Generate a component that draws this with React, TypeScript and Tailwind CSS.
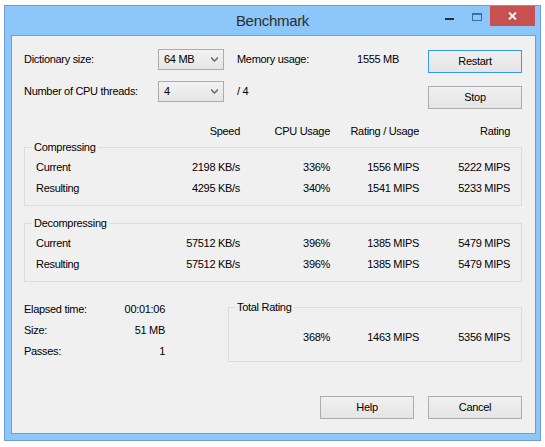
import type { ReactNode } from "react";

const cols = "grid grid-cols-[124px_80px_90px_89px_91px]";

function Chevron() {
  return (
    <svg width="7" height="5" viewBox="0 0 7 5" className="shrink-0">
      <path d="M0 0.5 L3.5 4 L7 0.5" fill="none" stroke="#707070" strokeWidth="1.6" />
    </svg>
  );
}

function Combo({ value }: { value: string }) {
  return (
    <div className="flex h-[21px] w-[66px] items-center justify-between border border-[#acacac] bg-gradient-to-b from-[#f2f2f2] to-[#e6e6e6] pl-[5px] pr-[5px]">
      <span>{value}</span>
      <Chevron />
    </div>
  );
}

function Btn({ children, focused }: { children: ReactNode; focused?: boolean }) {
  return (
    <div
      className={
        focused
          ? "flex h-[23px] w-[94px] items-center justify-center border border-[#3399ff] bg-gradient-to-b from-[#f0f0f0] to-[#e5e5e5]"
          : "flex h-[23px] w-[94px] items-center justify-center border border-[#acacac] bg-gradient-to-b from-[#f0f0f0] to-[#e5e5e5]"
      }
    >
      {children}
    </div>
  );
}

function Row({ label, cells }: { label: string; cells: string[] }) {
  return (
    <div className={`${cols} h-[21px] items-center`}>
      <span>{label}</span>
      {cells.map((c, i) => (
        <span key={i} className="text-right">
          {c}
        </span>
      ))}
    </div>
  );
}

function Group({ title, rows }: { title: string; rows: [string, string[]][] }) {
  return (
    <fieldset className="border border-[#dcdcdc] pb-[6px] pl-[11px]">
      <legend className="ml-[-4px] px-[2px] leading-[13px]">{title}</legend>
      <div className="pt-[3px]">
        {rows.map(([l, c]) => (
          <Row key={l} label={l} cells={c} />
        ))}
      </div>
    </fieldset>
  );
}

function TitleBar() {
  return (
    <div className="grid h-[29px] shrink-0 grid-cols-[1fr_auto_1fr]">
      <div />
      <div className="flex items-center pt-[1px] font-['Liberation_Sans',Arial,sans-serif] text-[15px] tracking-[-0.3px] text-[#2e2e2e]">
        Benchmark
      </div>
      <div className="flex items-start justify-end pr-[5px]">
        <div className="mt-[12px] h-[2px] w-[9px] bg-[#2b2b2b]" />
        <div className="ml-[18px] mt-[7px] h-[8px] w-[10px] border border-t-2 border-[#3b6ea8]" />
        <div className="ml-[8px] flex h-[20px] w-[45px] items-center justify-center bg-[#c75050]">
          <svg width="9" height="8" viewBox="0 0 9 8">
            <path d="M1 0.5 L8 7.5 M8 0.5 L1 7.5" stroke="#fff" strokeWidth="1.8" />
          </svg>
        </div>
      </div>
    </div>
  );
}

export default function App() {
  return (
    <div className="min-h-screen bg-white pl-[4px] pt-[5px] font-['Liberation_Sans',Arial,sans-serif]">
      <div className="flex h-[436px] w-[537px] flex-col border border-[#6f9fd2] bg-[#8dc6f8]">
        <TitleBar />
        <div className="mb-[6px] ml-[6px] mr-[4px] flex flex-1 flex-col border border-[#6d9fd4] bg-[#f0f0f0] pl-[12px] pr-[13px] text-[11px] leading-[13px] tracking-[-0.3px] text-black">
          <div className="flex">
            <div className="flex flex-col gap-[11px] pt-[13px]">
              <div className="flex h-[21px] items-center">
                <span className="w-[134px]">Dictionary size:</span>
                <Combo value="64 MB" />
                <span className="ml-[13px] w-[100px]">Memory usage:</span>
                <span className="w-[62px] text-right">1555 MB</span>
              </div>
              <div className="flex h-[21px] items-center">
                <span className="w-[134px]">Number of CPU threads:</span>
                <Combo value="4" />
                <span className="ml-[13px]">/ 4</span>
              </div>
            </div>
            <div className="ml-auto flex flex-col gap-[13px] pt-[14px]">
              <Btn focused>Restart</Btn>
              <Btn>Stop</Btn>
            </div>
          </div>

          <div className={`${cols} mt-[16px] pl-[12px]`}>
            <span />
            <span className="text-right">Speed</span>
            <span className="text-right">CPU Usage</span>
            <span className="text-right">Rating / Usage</span>
            <span className="text-right">Rating</span>
          </div>

          <div className="mt-[3px]">
            <Group
              title="Compressing"
              rows={[
                ["Current", ["2198 KB/s", "336%", "1556 MIPS", "5222 MIPS"]],
                ["Resulting", ["4295 KB/s", "340%", "1541 MIPS", "5233 MIPS"]],
              ]}
            />
          </div>
          <div className="mt-[11px]">
            <Group
              title="Decompressing"
              rows={[
                ["Current", ["57512 KB/s", "396%", "1385 MIPS", "5479 MIPS"]],
                ["Resulting", ["57512 KB/s", "396%", "1385 MIPS", "5479 MIPS"]],
              ]}
            />
          </div>

          <div className="mt-[17px] flex items-start">
            <div className="w-[141px]">
              {[
                ["Elapsed time:", "00:01:06"],
                ["Size:", "51 MB"],
                ["Passes:", "1"],
              ].map(([l, v]) => (
                <div key={l} className="flex h-[21px] items-center justify-between">
                  <span>{l}</span>
                  <span>{v}</span>
                </div>
              ))}
            </div>
            <fieldset className="ml-auto mt-[2px] w-[294px] border border-[#dcdcdc] pb-[17px]">
              <legend className="ml-[6px] px-[2px] leading-[13px]">Total Rating</legend>
              <div className="grid grid-cols-[101px_89px_91px] pt-[17px]">
                <span className="text-right">368%</span>
                <span className="text-right">1463 MIPS</span>
                <span className="text-right">5356 MIPS</span>
              </div>
            </fieldset>
          </div>

          <div className="mb-[14px] mt-auto flex justify-end gap-[14px]">
            <Btn>Help</Btn>
            <Btn>Cancel</Btn>
          </div>
        </div>
      </div>
    </div>
  );
}
